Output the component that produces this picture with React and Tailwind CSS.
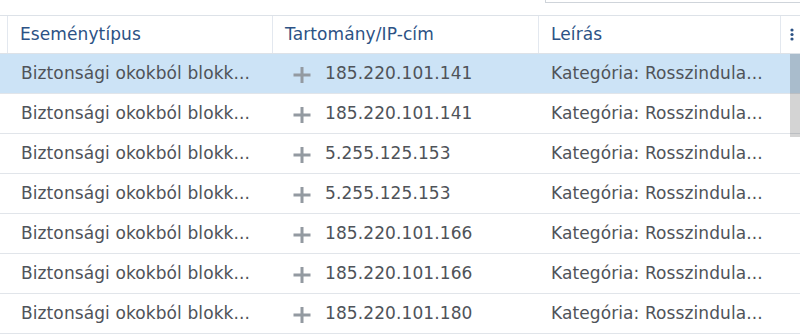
const rows = [
  { type: "Biztonsági okokból blokk...", ip: "185.220.101.141", desc: "Kategória: Rosszindula...", selected: true },
  { type: "Biztonsági okokból blokk...", ip: "185.220.101.141", desc: "Kategória: Rosszindula..." },
  { type: "Biztonsági okokból blokk...", ip: "5.255.125.153", desc: "Kategória: Rosszindula..." },
  { type: "Biztonsági okokból blokk...", ip: "5.255.125.153", desc: "Kategória: Rosszindula..." },
  { type: "Biztonsági okokból blokk...", ip: "185.220.101.166", desc: "Kategória: Rosszindula..." },
  { type: "Biztonsági okokból blokk...", ip: "185.220.101.166", desc: "Kategória: Rosszindula..." },
  { type: "Biztonsági okokból blokk...", ip: "185.220.101.180", desc: "Kategória: Rosszindula..." },
];

function PlusIcon() {
  return (
    <svg width="18" height="18" viewBox="0 0 18 18" className="shrink-0 mt-[2px]">
      <path d="M9 1v16M0.5 9h17" stroke="#939aa1" strokeWidth="3" />
    </svg>
  );
}

export default function App() {
  return (
    <div
      className="relative w-[800px] h-[336px] overflow-hidden bg-white text-[17px] tracking-[0.1px]"
      style={{ fontFamily: '"DejaVu Sans", Verdana, sans-serif' }}
    >
      {/* search box edge */}
      <div className="h-[15px] flex justify-end">
        <div className="w-[255px] h-[3px] border-l border-b border-[#cfd4da]" />
      </div>

      {/* header */}
      <div className="flex h-[39px] border-y border-[#dde2e8] text-[#2c5285]">
        <div className="w-[8px] border-r border-[#e3e8ef]" />
        <div className="w-[265px] border-r border-[#e3e8ef] flex items-center pl-[12px]">Eseménytípus</div>
        <div className="w-[266px] border-r border-[#e3e8ef] flex items-center pl-[12px]">Tartomány/IP-cím</div>
        <div className="w-[242px] border-r border-[#e3e8ef] flex items-center pl-[12px]">Leírás</div>
        <div className="flex-1 flex items-center pl-[9px]">
          <svg width="4" height="13" viewBox="0 0 4 13">
            <circle cx="2" cy="2" r="1.6" fill="#2c5285" />
            <circle cx="2" cy="6.5" r="1.6" fill="#2c5285" />
            <circle cx="2" cy="11" r="1.6" fill="#2c5285" />
          </svg>
        </div>
      </div>

      {/* rows */}
      <div className="text-[#4f5359]">
        {rows.map((r, i) => (
          <div
            key={i}
            className={
              "flex h-[40px] items-center border-b border-[#e1e5ea] " +
              (r.selected ? "bg-[#cce3f6]" : "bg-white")
            }
          >
            <div className="w-[273px] pl-[21px] whitespace-nowrap">{r.type}</div>
            <div className="w-[266px] pl-[20px] flex items-center gap-[14px] whitespace-nowrap">
              <PlusIcon />
              <span>{r.ip}</span>
            </div>
            <div className="flex-1 pl-[12px] whitespace-nowrap">{r.desc}</div>
          </div>
        ))}
      </div>

      {/* scrollbar thumb */}
      <div className="absolute right-0 top-[54px] w-[10px] h-[83px] bg-black/[0.17]" />
    </div>
  );
}
